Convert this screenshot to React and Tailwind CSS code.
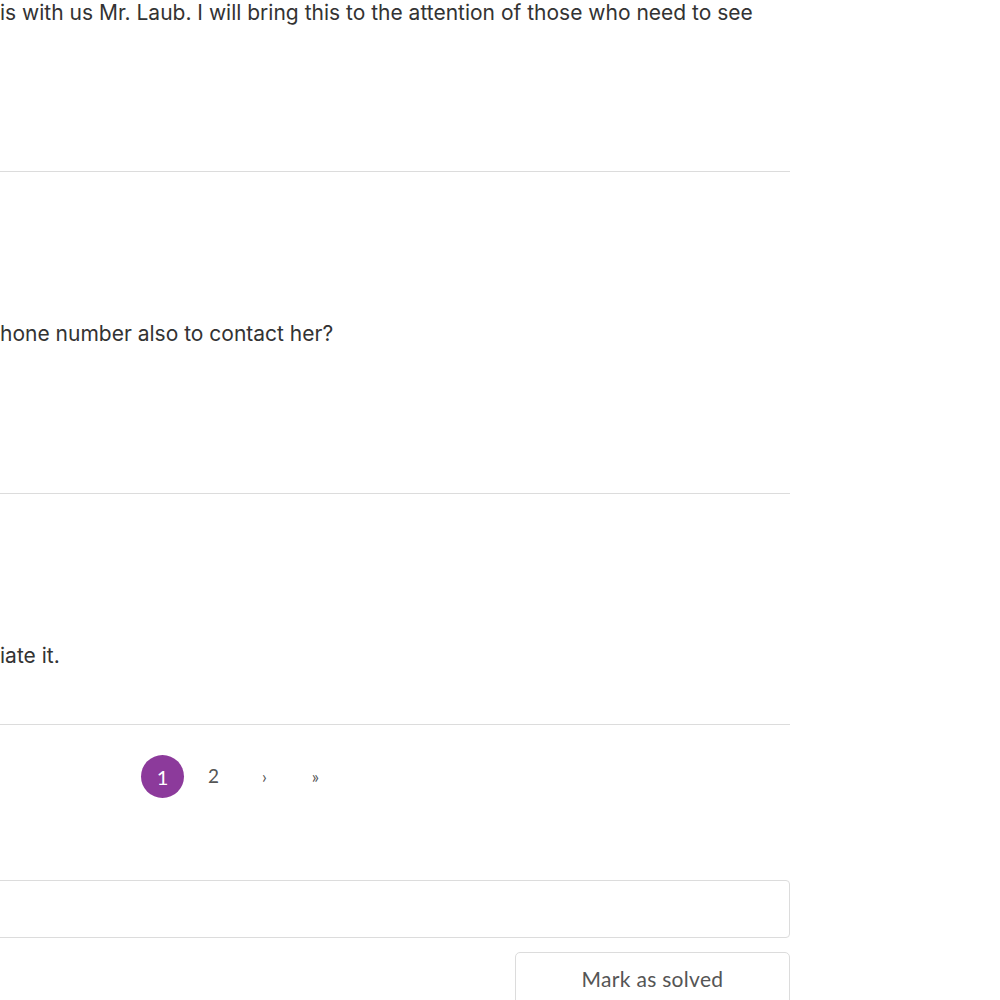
export default function App() {
  const body = { fontFamily: 'Inter, "Liberation Sans", Arial, sans-serif' };
  const ui = { fontFamily: 'Lato, "Liberation Sans", sans-serif' };
  return (
    <div className="w-[1000px] h-[1000px] overflow-hidden bg-white">
      <div className="w-[790px]" style={body}>
        {/* comment thread, clipped on the left */}
        <div className="h-[173px] border-b border-[#dcdcdc]">
          <p className="text-[21px] leading-[28px] -mt-[1px] text-[#333] whitespace-nowrap">
            is with us Mr. Laub. I will bring this to the attention of those who need to see
          </p>
        </div>
        <div className="h-[322px] border-b border-[#dcdcdc] pt-[148px]">
          <p className="text-[21px] leading-[28px] text-[#333] whitespace-nowrap">
            hone number also to contact her?
          </p>
        </div>
        <div className="h-[231px] border-b border-[#dcdcdc] pt-[148px]">
          <p className="text-[21px] leading-[28px] text-[#333] whitespace-nowrap">
            iate it.
          </p>
        </div>

        {/* pagination */}
        <div className="flex pt-[30px] pl-[141px] h-[155px] items-start">
          <span className="w-[43px] h-[43px] rounded-full bg-[#8c3a9b] text-white flex items-center justify-center text-[20px]" style={ui}>1</span>
          <span className="w-[43px] h-[43px] ml-[8px] flex items-center justify-center text-[19px] text-[#555]" style={ui}>2</span>
          <span className="w-[43px] h-[43px] ml-[8px] flex items-center justify-center text-[17px] text-[#555]" style={ui}>›</span>
          <span className="w-[43px] h-[43px] ml-[8px] flex items-center justify-center text-[17px] text-[#555]" style={ui}>»</span>
        </div>

        {/* reply box */}
        <div className="ml-[-10px] w-[800px] h-[58px] border border-[#dcdcdc] rounded-[4px]" />

        <div className="flex justify-end mt-[14px]">
          <button className="w-[275px] h-[60px] pb-[6px] border border-[#dcdcdc] rounded-[5px] text-[21px] tracking-[0.3px] text-[#555] bg-white" style={ui}>
            Mark as solved
          </button>
        </div>
      </div>
    </div>
  );
}
